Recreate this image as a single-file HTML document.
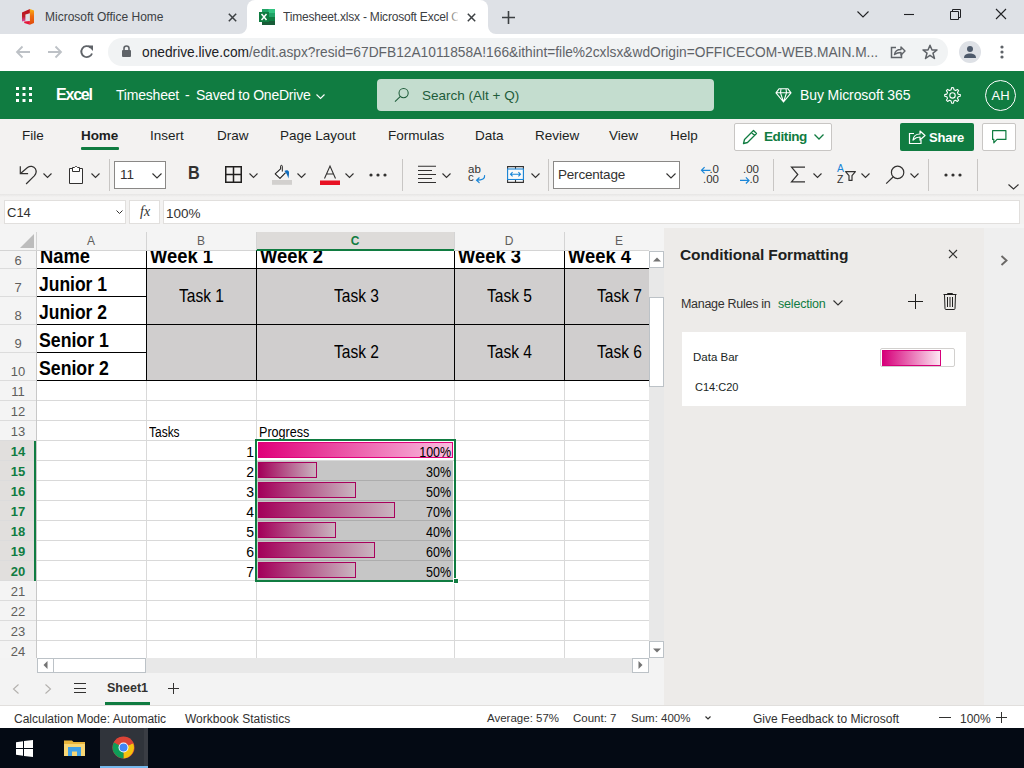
<!DOCTYPE html>
<html><head><meta charset="utf-8">
<style>
*{box-sizing:border-box;margin:0;padding:0}
html,body{width:1024px;height:768px;overflow:hidden;background:#fff;font-family:"Liberation Sans",sans-serif;color:#201f1e}
.a{position:absolute;white-space:nowrap}
svg{position:absolute;overflow:visible}
</style></head><body>

<!-- ============ CHROME TAB STRIP ============ -->
<div class="a" style="left:0;top:0;width:1024px;height:34px;background:#dee1e6"></div>
<!-- tab 1 -->
<svg style="left:0;top:0" width="40" height="34"><defs><linearGradient id="og" x1="0" y1="0" x2="0" y2="1"><stop offset="0" stop-color="#fbb315"/><stop offset="0.45" stop-color="#ee6b10"/><stop offset="1" stop-color="#e04a0c"/></linearGradient><linearGradient id="lg" x1="0" y1="0" x2="0" y2="1"><stop offset="0" stop-color="#b9111c"/><stop offset="0.6" stop-color="#c0202a"/><stop offset="1" stop-color="#dc4aa8"/></linearGradient></defs>
<path d="M22 12.6L29.9 9V13.2L25.4 14.4V20.8L22 21.6Z" fill="url(#lg)"/>
<path d="M24.2 21.4L29.9 20.9V24.8L24.2 22.9Z" fill="#e5163a"/>
<path d="M29.9 9L34 10.5V22.9L29.9 24.8Z" fill="url(#og)"/></svg>
<div class="a" style="left:45px;top:10px;font-size:12px;color:#3c4043">Microsoft Office Home</div>
<svg style="left:228px;top:13px" width="9" height="9"><path d="M0.8 0.8L8.2 8.2M8.2 0.8L0.8 8.2" stroke="#3c4043" stroke-width="1.5"/></svg>
<!-- active tab -->
<div class="a" style="left:247px;top:0px;width:241px;height:34px;background:#fff;border-radius:8px 8px 0 0"></div>
<svg style="left:239px;top:26px" width="8" height="8"><path d="M0 8A8 8 0 0 0 8 0V8Z" fill="#fff"/></svg>
<svg style="left:488px;top:26px" width="8" height="8"><path d="M8 8A8 8 0 0 1 0 0V8Z" fill="#fff"/></svg>
<svg style="left:259px;top:9px" width="16" height="16" viewBox="0 0 16 16">
  <rect x="3" y="0" width="13" height="16" fill="#21a366"/>
  <rect x="9.5" y="0" width="6.5" height="4" fill="#33c481"/>
  <rect x="3" y="12" width="13" height="4" fill="#185c37"/>
  <rect x="3" y="8" width="13" height="4" fill="#107c41"/>
  <rect x="0" y="3" width="10" height="10" fill="#107c41"/>
  <path d="M2.5 5L7.5 11M7.5 5L2.5 11" stroke="#fff" stroke-width="1.5"/>
</svg>
<div class="a" style="left:283px;top:10px;width:175px;overflow:hidden;font-size:12px;color:#3c4043;letter-spacing:-0.2px">Timesheet.xlsx - Microsoft Excel Online</div>
<div class="a" style="left:448px;top:5px;width:14px;height:24px;background:linear-gradient(90deg,rgba(255,255,255,0),#fff 80%)"></div>
<svg style="left:467px;top:13px" width="9" height="9"><path d="M0.8 0.8L8.2 8.2M8.2 0.8L0.8 8.2" stroke="#3c4043" stroke-width="1.5"/></svg>
<svg style="left:502px;top:11px" width="13" height="13"><path d="M6.5 0V13M0 6.5H13" stroke="#3c4043" stroke-width="1.6"/></svg>
<!-- window controls -->
<svg style="left:857px;top:11px" width="12" height="7"><path d="M0.5 0.5L6 6L11.5 0.5" fill="none" stroke="#202124" stroke-width="1.1"/></svg>
<svg style="left:904px;top:14px" width="10" height="1"><path d="M0 0.5H10" stroke="#202124" stroke-width="1.1"/></svg>
<svg style="left:950px;top:9px" width="11" height="11"><path d="M0.5 2.5H8.5V10.5H0.5Z M2.5 2.5V0.5H10.5V8.5H8.5" fill="none" stroke="#202124" stroke-width="1"/></svg>
<svg style="left:996px;top:9px" width="10" height="10"><path d="M0 0L10 10M10 0L0 10" stroke="#202124" stroke-width="1.1"/></svg>

<!-- ============ CHROME TOOLBAR ============ -->
<div class="a" style="left:0;top:34px;width:1024px;height:37px;background:#fff"></div>
<svg style="left:15px;top:45px" width="16" height="14"><path d="M15 7H2M7.5 1.5L2 7L7.5 12.5" fill="none" stroke="#bdc1c6" stroke-width="1.8"/></svg>
<svg style="left:47px;top:45px" width="16" height="14"><path d="M1 7H14M8.5 1.5L14 7L8.5 12.5" fill="none" stroke="#bdc1c6" stroke-width="1.8"/></svg>
<svg style="left:79px;top:44px" width="16" height="16" viewBox="0 0 16 16"><path d="M13 9.5A5.5 5.5 0 1 1 11.5 3.5" fill="none" stroke="#5f6368" stroke-width="1.9"/><path d="M8.5 1.5H14V7Z" fill="#5f6368"/></svg>
<div class="a" style="left:108px;top:38px;width:840px;height:28px;background:#f1f3f4;border-radius:14px"></div>
<svg style="left:122px;top:45px" width="9" height="12" viewBox="0 0 9 12"><path d="M2 5V3.5A2.5 2.5 0 0 1 7 3.5V5" fill="none" stroke="#5f6368" stroke-width="1.6"/><rect x="0" y="5" width="9" height="7" rx="1" fill="#5f6368"/></svg>
<div class="a" style="left:142px;top:45px;font-size:13.75px;color:#5f6368"><span style="color:#202124">onedrive.live.com</span>/edit.aspx?resid=67DFB12A1011858A!166&amp;ithint=file%2cxlsx&amp;wdOrigin=OFFICECOM-WEB.MAIN.M...</div>
<svg style="left:890px;top:45px" width="16" height="14" viewBox="0 0 16 14"><path d="M6 2.5H1.5V12.5H11.5V9" fill="none" stroke="#5f6368" stroke-width="1.5"/><path d="M4.5 9.5C5 6 8 4.5 11 4.5V2L15 6L11 10V7.5C8.5 7.5 6.5 8 4.5 9.5Z" fill="none" stroke="#5f6368" stroke-width="1.4" stroke-linejoin="round"/></svg>
<svg style="left:922px;top:44px" width="16" height="16" viewBox="0 0 16 16"><path d="M8 1.2L10 6H15L11 9.2L12.5 14.5L8 11.3L3.5 14.5L5 9.2L1 6H6Z" fill="none" stroke="#5f6368" stroke-width="1.5" stroke-linejoin="round"/></svg>
<div class="a" style="left:959px;top:41px;width:22px;height:22px;border-radius:11px;background:#dee1e6"></div>
<svg style="left:963px;top:45px" width="14" height="14" viewBox="0 0 14 14"><circle cx="7" cy="4" r="3" fill="#4e5a6b"/><path d="M1 13C1 9.5 4 8.5 7 8.5S13 9.5 13 13Z" fill="#4e5a6b"/></svg>
<svg style="left:1000px;top:45px" width="4" height="14"><circle cx="2" cy="2" r="1.6" fill="#5f6368"/><circle cx="2" cy="7" r="1.6" fill="#5f6368"/><circle cx="2" cy="12" r="1.6" fill="#5f6368"/></svg>

<!-- ============ EXCEL HEADER ============ -->
<div class="a" style="left:0;top:71px;width:1024px;height:48px;background:#107c41"></div>
<svg style="left:16px;top:87px" width="16" height="16"><g fill="#fff">
<rect x="0" y="0" width="3" height="3"/><rect x="6.5" y="0" width="3" height="3"/><rect x="13" y="0" width="3" height="3"/>
<rect x="0" y="6" width="3" height="3"/><rect x="6.5" y="6" width="3" height="3"/><rect x="13" y="6" width="3" height="3"/>
<rect x="0" y="12" width="3" height="3"/><rect x="6.5" y="12" width="3" height="3"/><rect x="13" y="12" width="3" height="3"/></g></svg>
<div class="a" style="left:56px;top:86px;font-size:16px;font-weight:700;color:#fff;letter-spacing:-1.2px">Excel</div>
<div class="a" style="left:116px;top:87px;font-size:14px;color:#fff;letter-spacing:-0.2px">Timesheet</div><div class="a" style="left:185px;top:87px;font-size:14px;color:#fff">-</div><div class="a" style="left:196px;top:87px;font-size:14px;color:#fff;letter-spacing:-0.22px">Saved to OneDrive</div>
<svg style="left:316px;top:94px" width="9" height="5"><path d="M0.5 0.5L4.5 4.5L8.5 0.5" fill="none" stroke="#fff" stroke-width="1.1"/></svg>
<div class="a" style="left:377px;top:79px;width:337px;height:32px;background:#c4ddcf;border-radius:4px"></div>
<svg style="left:394px;top:87px" width="16" height="16" viewBox="0 0 16 16"><circle cx="9.6" cy="6.1" r="4.6" fill="none" stroke="#1e5c3a" stroke-width="1.05"/><path d="M6.4 9.4L1 14.6" stroke="#1e5c3a" stroke-width="1.1"/></svg>
<div class="a" style="left:422px;top:88px;font-size:13.5px;color:#1e5c3a">Search (Alt + Q)</div>
<svg style="left:775px;top:88px" width="17" height="15" viewBox="0 0 17 15"><path d="M4 0.8H13L16 4.8L8.5 14L1 4.8Z M1 4.8H16 M6 0.8L5.5 4.8L8.5 14L11.5 4.8L11 0.8" fill="none" stroke="#fff" stroke-width="1.1" stroke-linejoin="round"/></svg>
<div class="a" style="left:800px;top:87px;font-size:14px;color:#fff;letter-spacing:-0.1px">Buy Microsoft 365</div>
<svg style="left:943px;top:86px" width="18" height="18" viewBox="0 0 18 18"><path d="M9 1.5L10.5 1.7L11 3.8L12.6 4.6L14.5 3.5L15.6 4.6L14.5 6.5L15.2 8.2L17.3 8.6V10.2L15.2 10.7L14.5 12.3L15.6 14.2L14.4 15.4L12.5 14.3L10.9 15L10.4 17.2H8.6L8.1 15L6.5 14.3L4.6 15.4L3.4 14.2L4.5 12.3L3.8 10.7L1.7 10.2V8.6L3.8 8.1L4.5 6.5L3.4 4.6L4.6 3.4L6.5 4.5L8.1 3.8L8.6 1.7Z" fill="none" stroke="#fff" stroke-width="1.1" stroke-linejoin="round"/><circle cx="9.5" cy="9.4" r="2.7" fill="none" stroke="#fff" stroke-width="1.1"/></svg>
<div class="a" style="left:985px;top:80px;width:31px;height:31px;border-radius:50%;border:1px solid #fff"></div>
<div class="a" style="left:985px;top:88px;width:31px;text-align:center;font-size:13px;color:#fff">AH</div>

<!-- ============ RIBBON ============ -->
<div class="a" style="left:0;top:119px;width:1024px;height:77px;background:#f3f2f1"></div>
<div class="a" style="left:0;top:194px;width:1024px;height:3px;background:linear-gradient(#e6e5e4,#f3f2f1)"></div>
<div class="a" style="top:128px;left:0;font-size:13.5px;color:#201f1e">
  <span class="a" style="left:22px">File</span>
  <span class="a" style="left:81px;font-weight:700;letter-spacing:-0.1px">Home</span>
  <span class="a" style="left:150px">Insert</span>
  <span class="a" style="left:217px">Draw</span>
  <span class="a" style="left:280px">Page Layout</span>
  <span class="a" style="left:388px">Formulas</span>
  <span class="a" style="left:475px">Data</span>
  <span class="a" style="left:535px">Review</span>
  <span class="a" style="left:609px">View</span>
  <span class="a" style="left:670px">Help</span>
</div>
<div class="a" style="left:81px;top:147px;width:38px;height:3px;background:#107c41;border-radius:1px"></div>
<!-- Editing btn -->
<div class="a" style="left:734px;top:123px;width:98px;height:28px;background:#fff;border:1px solid #c8c6c4;border-radius:2px"></div>
<svg style="left:742px;top:129px" width="16" height="16" viewBox="0 0 16 16"><path d="M1.5 14.5L2.5 10.5L11.5 1.5L14.5 4.5L5.5 13.5Z M9.5 3.5L12.5 6.5" fill="none" stroke="#107c41" stroke-width="1.3" stroke-linejoin="round"/></svg>
<div class="a" style="left:764px;top:129px;font-size:13.5px;font-weight:700;color:#107c41;letter-spacing:-0.4px">Editing</div>
<svg style="left:814px;top:134px" width="10" height="6"><path d="M0.5 0.5L5 5L9.5 0.5" fill="none" stroke="#107c41" stroke-width="1.3"/></svg>
<!-- Share btn -->
<div class="a" style="left:900px;top:123px;width:74px;height:28px;background:#107c41;border-radius:2px"></div>
<svg style="left:908px;top:128px" width="18" height="17" viewBox="0 0 18 17"><path d="M6 5.5H1.5V15.5H13V12" fill="none" stroke="#fff" stroke-width="1.2"/><path d="M5 12C5.5 8 8.5 6 12 6V3L17 7.5L12 12V9C9 9 7 10 5 12Z" fill="none" stroke="#fff" stroke-width="1.2" stroke-linejoin="round"/></svg>
<div class="a" style="left:929px;top:130px;font-size:13px;font-weight:700;color:#fff;letter-spacing:-0.2px">Share</div>
<!-- comment btn -->
<div class="a" style="left:982px;top:123px;width:34px;height:28px;background:#fff;border:1px solid #c8c6c4;border-radius:2px"></div>
<svg style="left:992px;top:130px" width="15" height="14" viewBox="0 0 15 14"><path d="M0.6 0.6H13.9V9.4H5L1.8 12.8V9.4H0.6Z" fill="none" stroke="#107c41" stroke-width="1.2" stroke-linejoin="round"/></svg>

<!-- toolbar icons -->
<g id="tb"></g>
<svg style="left:19px;top:165px" width="19" height="20" viewBox="0 0 19 20"><path d="M1.3 1.3V8.6H9.1" fill="none" stroke="#323130" stroke-width="1.2"/><path d="M1.8 8.2L8.5 2.5C11 0.6 14.8 0.9 16.4 3.8C17.7 6.3 17 9 15.3 10.9L7.1 19" fill="none" stroke="#323130" stroke-width="1.2"/></svg>
<svg style="left:43px;top:173px" width="10" height="6"><path d="M0.5 0.5L4.5 4.5L8.5 0.5" fill="none" stroke="#323130" stroke-width="1.1"/></svg>
<svg style="left:69px;top:166px" width="14" height="18" viewBox="0 0 14 18"><path d="M0.5 2.5H13.5V17.5H0.5Z" fill="#fafafa" stroke="#323130" stroke-width="1"/><path d="M3.5 5.5V1.5H5.5L6.5 0.5H7.5L8.5 1.5H10.5V5.5Z" fill="#fff" stroke="#323130" stroke-width="1"/></svg>
<svg style="left:91px;top:173px" width="10" height="6"><path d="M0.5 0.5L4.5 4.5L8.5 0.5" fill="none" stroke="#323130" stroke-width="1.1"/></svg>
<div class="a" style="left:109px;top:159px;width:1px;height:32px;background:#c8c6c4"></div>
<div class="a" style="left:114px;top:161px;width:52px;height:28px;background:#fff;border:1px solid #8a8886"></div>
<div class="a" style="left:120px;top:167px;font-size:13.5px;color:#323130">11</div>
<svg style="left:152px;top:173px" width="10" height="6"><path d="M0.5 0.5L5 5L9.5 0.5" fill="none" stroke="#323130" stroke-width="1.1"/></svg>
<div class="a" style="left:188px;top:163px;font-size:18px;font-weight:700;color:#323130;transform:scaleX(0.9);transform-origin:left">B</div>
<svg style="left:225px;top:166px" width="17" height="17" viewBox="0 0 17 17"><path d="M0.75 0.75H16.25V16.25H0.75Z M8.5 0.75V16.25 M0.75 8.5H16.25" fill="none" stroke="#201f1e" stroke-width="1.5"/></svg>
<svg style="left:249px;top:173px" width="10" height="6"><path d="M0.5 0.5L4.5 4.5L8.5 0.5" fill="none" stroke="#323130" stroke-width="1.1"/></svg>
<svg style="left:268px;top:160px" width="30" height="30" viewBox="0 0 30 30"><path d="M12.6 8.8L7.2 13.9L12 18.4L17.6 12.6" fill="#fafafa" stroke="#201f1e" stroke-width="1.1" stroke-linejoin="round"/><path d="M12.6 9V6.2A0.8 0.8 0 0 1 14.3 6.2V11.6" fill="none" stroke="#201f1e" stroke-width="1"/><path d="M16.4 11C18.4 9.6 20.6 10.2 21 12C21.2 14 20.8 16.2 20.4 18.6C19.6 16 18.6 13 16.4 11Z" fill="#0f6cbd"/><rect x="4" y="20" width="20" height="4.8" fill="#d2d0ce"/></svg>
<svg style="left:297px;top:173px" width="10" height="6"><path d="M0.5 0.5L4.5 4.5L8.5 0.5" fill="none" stroke="#323130" stroke-width="1.1"/></svg>
<svg style="left:320px;top:165px" width="20" height="21" viewBox="0 0 20 21"><path d="M4.5 13.5L10 1L15.5 13.5 M6.5 9H13.5" fill="none" stroke="#323130" stroke-width="1.1"/><rect x="0" y="15.5" width="20" height="4.5" fill="#e81123"/></svg>
<svg style="left:345px;top:173px" width="10" height="6"><path d="M0.5 0.5L4.5 4.5L8.5 0.5" fill="none" stroke="#323130" stroke-width="1.1"/></svg>
<svg style="left:369px;top:173px" width="18" height="4"><circle cx="2" cy="2" r="1.6" fill="#323130"/><circle cx="9" cy="2" r="1.6" fill="#323130"/><circle cx="16" cy="2" r="1.6" fill="#323130"/></svg>
<div class="a" style="left:402px;top:159px;width:1px;height:32px;background:#c8c6c4"></div>
<svg style="left:418px;top:165px" width="18" height="19"><path d="M0 1.25H18M0 5.4H14M0 9.45H18M0 13.5H14M0 17.5H18" stroke="#323130" stroke-width="1.05"/></svg>
<svg style="left:442px;top:173px" width="10" height="6"><path d="M0.5 0.5L4.5 4.5L8.5 0.5" fill="none" stroke="#323130" stroke-width="1.1"/></svg>
<div class="a" style="left:468px;top:163px;font-size:11.5px;color:#323130;line-height:12px">ab</div><div class="a" style="left:468px;top:171px;font-size:11.5px;color:#323130;line-height:12px">c</div>
<svg style="left:474px;top:174px" width="12" height="10" viewBox="0 0 12 10"><path d="M10.6 1.5C11 4.5 8.5 6.2 2.8 6.2 M5.2 3.8L2.6 6.2L5.2 8.6" fill="none" stroke="#1a86d8" stroke-width="1.2" stroke-linecap="round"/></svg>
<svg style="left:507px;top:166px" width="18" height="18" viewBox="0 0 18 18"><path d="M0.6 0.6H16.4V16.4H0.6Z M8.5 0.6V3 M8.5 13.5V16.4" fill="#fff" stroke="#323130" stroke-width="1.1"/><rect x="0.6" y="3" width="15.8" height="10.5" fill="#fafafa" stroke="#1a86d8" stroke-width="1.1"/><path d="M3.5 8.2H13.5 M5.6 6.1L3.5 8.2L5.6 10.3 M11.4 6.1L13.5 8.2L11.4 10.3" fill="none" stroke="#1a86d8" stroke-width="1.1"/></svg>
<svg style="left:531px;top:173px" width="10" height="6"><path d="M0.5 0.5L4.5 4.5L8.5 0.5" fill="none" stroke="#323130" stroke-width="1.1"/></svg>
<div class="a" style="left:548px;top:159px;width:1px;height:32px;background:#c8c6c4"></div>
<div class="a" style="left:553px;top:161px;width:127px;height:28px;background:#fff;border:1px solid #8a8886"></div>
<div class="a" style="left:558px;top:167px;font-size:13.5px;color:#323130;letter-spacing:-0.2px">Percentage</div>
<svg style="left:666px;top:173px" width="10" height="6"><path d="M0.5 0.5L5 5L9.5 0.5" fill="none" stroke="#323130" stroke-width="1.1"/></svg>
<!-- decimal icons -->
<div class="a" style="left:703px;top:164px;font-size:11.5px;color:#323130;line-height:10px;text-align:right;width:16px">.0</div><div class="a" style="left:701px;top:174px;font-size:11.5px;color:#323130;line-height:10px;text-align:right;width:18px">.00</div>
<svg style="left:700px;top:166px" width="11" height="9"><path d="M10.5 4.3H1.5 M4.6 1.2L1.5 4.3L4.6 7.4" fill="none" stroke="#1a86d8" stroke-width="1.2"/></svg>
<div class="a" style="left:740px;top:164px;font-size:11.5px;color:#323130;line-height:10px;text-align:right;width:19px">.00</div><div class="a" style="left:740px;top:174px;font-size:11.5px;color:#323130;line-height:10px;text-align:right;width:19px">.0</div>
<svg style="left:739px;top:176px" width="12" height="9"><path d="M1 4.4H10 M6.9 1.3L10 4.4L6.9 7.5" fill="none" stroke="#1a86d8" stroke-width="1.2"/></svg>
<div class="a" style="left:773px;top:159px;width:1px;height:32px;background:#c8c6c4"></div>
<svg style="left:790px;top:166px" width="16" height="17"><path d="M15 1.2H1.5L7.8 8.5L1.5 15.9H15" fill="none" stroke="#323130" stroke-width="1.2"/></svg>
<svg style="left:813px;top:173px" width="10" height="6"><path d="M0.5 0.5L4.5 4.5L8.5 0.5" fill="none" stroke="#323130" stroke-width="1.1"/></svg>
<div class="a" style="left:837px;top:163px;font-size:10.5px;color:#1a86d8;line-height:10px">A</div>
<div class="a" style="left:837px;top:174px;font-size:10.5px;color:#323130;line-height:10px">Z</div>
<svg style="left:845px;top:171px" width="11" height="10"><path d="M0.6 0.6H10.4L7 4.6V9.4H4V4.6Z" fill="none" stroke="#323130" stroke-width="1.2" stroke-linejoin="round"/></svg>
<svg style="left:861px;top:173px" width="10" height="6"><path d="M0.5 0.5L4.5 4.5L8.5 0.5" fill="none" stroke="#323130" stroke-width="1.1"/></svg>
<svg style="left:885px;top:165px" width="20" height="20" viewBox="0 0 20 20"><circle cx="12.6" cy="7.4" r="6.2" fill="none" stroke="#323130" stroke-width="1.2"/><path d="M8.3 11.8L1.2 18.6" stroke="#323130" stroke-width="1.2"/></svg>
<svg style="left:910px;top:173px" width="10" height="6"><path d="M0.5 0.5L4.5 4.5L8.5 0.5" fill="none" stroke="#323130" stroke-width="1.1"/></svg>
<div class="a" style="left:928px;top:159px;width:1px;height:32px;background:#c8c6c4"></div>
<svg style="left:944px;top:173px" width="18" height="4"><circle cx="2" cy="2" r="1.6" fill="#323130"/><circle cx="9" cy="2" r="1.6" fill="#323130"/><circle cx="16" cy="2" r="1.6" fill="#323130"/></svg>
<div class="a" style="left:977px;top:159px;width:1px;height:32px;background:#c8c6c4"></div>
<svg style="left:1008px;top:184px" width="11" height="6"><path d="M0.5 0.5L5.5 5L10.5 0.5" fill="none" stroke="#323130" stroke-width="1.1"/></svg>

<!-- ============ FORMULA BAR ============ -->
<div class="a" style="left:0;top:197px;width:1024px;height:34px;background:#f3f2f1"></div>
<div class="a" style="left:4px;top:200px;width:122px;height:24px;background:#fff;border:1px solid #e1dfdd"></div>
<div class="a" style="left:7px;top:205px;font-size:13px;color:#323130">C14</div>
<svg style="left:116px;top:210px" width="7" height="5"><path d="M0.5 0.5L3.5 3.5L6.5 0.5" fill="none" stroke="#323130" stroke-width="1"/></svg>
<div class="a" style="left:129px;top:200px;width:31px;height:24px;background:#fff;border:1px solid #e1dfdd"></div>
<div class="a" style="left:140px;top:204px;font-size:14px;font-style:italic;font-family:'Liberation Serif',serif;color:#323130">fx</div>
<div class="a" style="left:163px;top:200px;width:857px;height:24px;background:#fff;border:1px solid #e1dfdd"></div>
<div class="a" style="left:166px;top:206px;font-size:13.5px;color:#323130">100%</div>

<div class="a" style="left:0;top:224px;width:664px;height:434px;background:#fff"></div>
<div class="a" style="left:0;top:224px;width:649px;height:27px;background:#f4f4f4;border-bottom:1px solid #d4d4d4"></div>
<div class="a" style="left:256px;top:232px;width:198px;height:19px;background:#dddbd9;border-bottom:2px solid #107c41"></div>
<div class="a" style="left:36px;top:232px;width:1px;height:18px;background:#d4d4d4"></div>
<svg style="left:20px;top:234px" width="14" height="14"><path d="M14 0V14H0Z" fill="#bcbcbc"/></svg>
<div class="a" style="left:0;top:251px;width:37px;height:407px;background:#f4f4f4;border-right:1px solid #c8c8c8"></div>
<div class="a" style="left:146px;top:232px;width:1px;height:18px;background:#d4d4d4"></div>
<div class="a" style="left:256px;top:232px;width:1px;height:18px;background:#d4d4d4"></div>
<div class="a" style="left:454px;top:232px;width:1px;height:18px;background:#d4d4d4"></div>
<div class="a" style="left:564px;top:232px;width:1px;height:18px;background:#d4d4d4"></div>
<div class="a" style="left:36px;top:234px;width:110px;text-align:center;font-size:12px;color:#605e5c">A</div>
<div class="a" style="left:146px;top:234px;width:110px;text-align:center;font-size:12px;color:#605e5c">B</div>
<div class="a" style="left:256px;top:234px;width:198px;text-align:center;font-size:12px;font-weight:700;color:#107c41">C</div>
<div class="a" style="left:454px;top:234px;width:110px;text-align:center;font-size:12px;color:#605e5c">D</div>
<div class="a" style="left:564px;top:234px;width:110px;text-align:center;font-size:12px;color:#605e5c">E</div>
<div class="a" style="left:0;top:268px;width:36px;height:1px;background:#dcdcdc"></div>
<div class="a" style="left:0;top:253px;width:36px;text-align:center;font-size:13px;font-weight:400;color:#605e5c">6</div>
<div class="a" style="left:0;top:296px;width:36px;height:1px;background:#dcdcdc"></div>
<div class="a" style="left:0;top:280px;width:36px;text-align:center;font-size:13px;font-weight:400;color:#605e5c">7</div>
<div class="a" style="left:0;top:324px;width:36px;height:1px;background:#dcdcdc"></div>
<div class="a" style="left:0;top:308px;width:36px;text-align:center;font-size:13px;font-weight:400;color:#605e5c">8</div>
<div class="a" style="left:0;top:352px;width:36px;height:1px;background:#dcdcdc"></div>
<div class="a" style="left:0;top:336px;width:36px;text-align:center;font-size:13px;font-weight:400;color:#605e5c">9</div>
<div class="a" style="left:0;top:380px;width:36px;height:1px;background:#dcdcdc"></div>
<div class="a" style="left:0;top:364px;width:36px;text-align:center;font-size:13px;font-weight:400;color:#605e5c">10</div>
<div class="a" style="left:0;top:400px;width:36px;height:1px;background:#dcdcdc"></div>
<div class="a" style="left:0;top:384px;width:36px;text-align:center;font-size:13px;font-weight:400;color:#605e5c">11</div>
<div class="a" style="left:0;top:420px;width:36px;height:1px;background:#dcdcdc"></div>
<div class="a" style="left:0;top:404px;width:36px;text-align:center;font-size:13px;font-weight:400;color:#605e5c">12</div>
<div class="a" style="left:0;top:440px;width:36px;height:1px;background:#dcdcdc"></div>
<div class="a" style="left:0;top:424px;width:36px;text-align:center;font-size:13px;font-weight:400;color:#605e5c">13</div>
<div class="a" style="left:0;top:441px;width:34px;height:20px;background:#e1dfdd"></div>
<div class="a" style="left:0;top:460px;width:36px;height:1px;background:#dcdcdc"></div>
<div class="a" style="left:0;top:444px;width:36px;text-align:center;font-size:13px;font-weight:700;color:#107c41">14</div>
<div class="a" style="left:0;top:461px;width:34px;height:20px;background:#e1dfdd"></div>
<div class="a" style="left:0;top:480px;width:36px;height:1px;background:#dcdcdc"></div>
<div class="a" style="left:0;top:464px;width:36px;text-align:center;font-size:13px;font-weight:700;color:#107c41">15</div>
<div class="a" style="left:0;top:481px;width:34px;height:20px;background:#e1dfdd"></div>
<div class="a" style="left:0;top:500px;width:36px;height:1px;background:#dcdcdc"></div>
<div class="a" style="left:0;top:484px;width:36px;text-align:center;font-size:13px;font-weight:700;color:#107c41">16</div>
<div class="a" style="left:0;top:501px;width:34px;height:20px;background:#e1dfdd"></div>
<div class="a" style="left:0;top:520px;width:36px;height:1px;background:#dcdcdc"></div>
<div class="a" style="left:0;top:504px;width:36px;text-align:center;font-size:13px;font-weight:700;color:#107c41">17</div>
<div class="a" style="left:0;top:521px;width:34px;height:20px;background:#e1dfdd"></div>
<div class="a" style="left:0;top:540px;width:36px;height:1px;background:#dcdcdc"></div>
<div class="a" style="left:0;top:524px;width:36px;text-align:center;font-size:13px;font-weight:700;color:#107c41">18</div>
<div class="a" style="left:0;top:541px;width:34px;height:20px;background:#e1dfdd"></div>
<div class="a" style="left:0;top:560px;width:36px;height:1px;background:#dcdcdc"></div>
<div class="a" style="left:0;top:544px;width:36px;text-align:center;font-size:13px;font-weight:700;color:#107c41">19</div>
<div class="a" style="left:0;top:561px;width:34px;height:20px;background:#e1dfdd"></div>
<div class="a" style="left:0;top:580px;width:36px;height:1px;background:#dcdcdc"></div>
<div class="a" style="left:0;top:564px;width:36px;text-align:center;font-size:13px;font-weight:700;color:#107c41">20</div>
<div class="a" style="left:0;top:600px;width:36px;height:1px;background:#dcdcdc"></div>
<div class="a" style="left:0;top:584px;width:36px;text-align:center;font-size:13px;font-weight:400;color:#605e5c">21</div>
<div class="a" style="left:0;top:620px;width:36px;height:1px;background:#dcdcdc"></div>
<div class="a" style="left:0;top:604px;width:36px;text-align:center;font-size:13px;font-weight:400;color:#605e5c">22</div>
<div class="a" style="left:0;top:640px;width:36px;height:1px;background:#dcdcdc"></div>
<div class="a" style="left:0;top:624px;width:36px;text-align:center;font-size:13px;font-weight:400;color:#605e5c">23</div>
<div class="a" style="left:0;top:660px;width:36px;height:1px;background:#dcdcdc"></div>
<div class="a" style="left:0;top:644px;width:36px;text-align:center;font-size:13px;font-weight:400;color:#605e5c">24</div>
<div class="a" style="left:34px;top:441px;width:2px;height:140px;background:#107c41"></div>
<div class="a" style="left:37px;top:380px;width:612px;height:1px;background:#d9d9d9"></div>
<div class="a" style="left:37px;top:400px;width:612px;height:1px;background:#d9d9d9"></div>
<div class="a" style="left:37px;top:420px;width:612px;height:1px;background:#d9d9d9"></div>
<div class="a" style="left:37px;top:440px;width:612px;height:1px;background:#d9d9d9"></div>
<div class="a" style="left:37px;top:460px;width:612px;height:1px;background:#d9d9d9"></div>
<div class="a" style="left:37px;top:480px;width:612px;height:1px;background:#d9d9d9"></div>
<div class="a" style="left:37px;top:500px;width:612px;height:1px;background:#d9d9d9"></div>
<div class="a" style="left:37px;top:520px;width:612px;height:1px;background:#d9d9d9"></div>
<div class="a" style="left:37px;top:540px;width:612px;height:1px;background:#d9d9d9"></div>
<div class="a" style="left:37px;top:560px;width:612px;height:1px;background:#d9d9d9"></div>
<div class="a" style="left:37px;top:580px;width:612px;height:1px;background:#d9d9d9"></div>
<div class="a" style="left:37px;top:600px;width:612px;height:1px;background:#d9d9d9"></div>
<div class="a" style="left:37px;top:620px;width:612px;height:1px;background:#d9d9d9"></div>
<div class="a" style="left:37px;top:640px;width:612px;height:1px;background:#d9d9d9"></div>
<div class="a" style="left:37px;top:660px;width:612px;height:1px;background:#d9d9d9"></div>
<div class="a" style="left:146px;top:251px;width:1px;height:407px;background:#d9d9d9"></div>
<div class="a" style="left:256px;top:251px;width:1px;height:407px;background:#d9d9d9"></div>
<div class="a" style="left:454px;top:251px;width:1px;height:407px;background:#d9d9d9"></div>
<div class="a" style="left:564px;top:251px;width:1px;height:407px;background:#d9d9d9"></div>
<div class="a" style="left:146px;top:268px;width:110px;height:56px;background:#d0cece"></div>
<div class="a" style="left:146px;top:324px;width:110px;height:56px;background:#d0cece"></div>
<div class="a" style="left:256px;top:268px;width:198px;height:56px;background:#d0cece"></div>
<div class="a" style="left:256px;top:324px;width:198px;height:56px;background:#d0cece"></div>
<div class="a" style="left:454px;top:268px;width:110px;height:56px;background:#d0cece"></div>
<div class="a" style="left:454px;top:324px;width:110px;height:56px;background:#d0cece"></div>
<div class="a" style="left:564px;top:268px;width:85px;height:56px;background:#d0cece"></div>
<div class="a" style="left:564px;top:324px;width:85px;height:56px;background:#d0cece"></div>
<div class="a" style="left:37px;top:268px;width:612px;height:1px;background:#000"></div>
<div class="a" style="left:37px;top:324px;width:612px;height:1px;background:#000"></div>
<div class="a" style="left:37px;top:380px;width:612px;height:1px;background:#000"></div>
<div class="a" style="left:37px;top:296px;width:109px;height:1px;background:#000"></div>
<div class="a" style="left:37px;top:352px;width:109px;height:1px;background:#000"></div>
<div class="a" style="left:146px;top:251px;width:1px;height:130px;background:#000"></div>
<div class="a" style="left:256px;top:251px;width:1px;height:130px;background:#000"></div>
<div class="a" style="left:454px;top:251px;width:1px;height:130px;background:#000"></div>
<div class="a" style="left:564px;top:251px;width:1px;height:130px;background:#000"></div>
<div class="a" style="left:37px;top:251px;width:612px;height:17px;overflow:hidden">
<div class="a" style="left:2.6000000000000014px;top:-4.73px;font-size:20px;line-height:20px;color:#000;transform:scaleX(0.9174);transform-origin:left top;font-weight:700">Name</div>
<div class="a" style="left:113.19999999999999px;top:-4.73px;font-size:20px;line-height:20px;color:#000;transform:scaleX(0.9184);transform-origin:left top;font-weight:700">Week 1</div>
<div class="a" style="left:223.2px;top:-4.73px;font-size:20px;line-height:20px;color:#000;transform:scaleX(0.9184);transform-origin:left top;font-weight:700">Week 2</div>
<div class="a" style="left:421.2px;top:-4.73px;font-size:20px;line-height:20px;color:#000;transform:scaleX(0.9184);transform-origin:left top;font-weight:700">Week 3</div>
<div class="a" style="left:531.2px;top:-4.73px;font-size:20px;line-height:20px;color:#000;transform:scaleX(0.9184);transform-origin:left top;font-weight:700">Week 4</div>
</div>
<div class="a" style="left:39px;top:274.37px;font-size:20px;line-height:20px;color:#000;transform:scaleX(0.8740);transform-origin:left top;font-weight:700">Junior 1</div>
<div class="a" style="left:39px;top:302.37px;font-size:20px;line-height:20px;color:#000;transform:scaleX(0.8740);transform-origin:left top;font-weight:700">Junior 2</div>
<div class="a" style="left:39px;top:330.37px;font-size:20px;line-height:20px;color:#000;transform:scaleX(0.8847);transform-origin:left top;font-weight:700">Senior 1</div>
<div class="a" style="left:39px;top:358.37px;font-size:20px;line-height:20px;color:#000;transform:scaleX(0.8847);transform-origin:left top;font-weight:700">Senior 2</div>
<div class="a" style="left:179.2px;top:287.34px;font-size:18.5px;line-height:18.5px;color:#000;transform:scaleX(0.8411);transform-origin:left top;">Task 1</div>
<div class="a" style="left:333.5px;top:287.34px;font-size:18.5px;line-height:18.5px;color:#000;transform:scaleX(0.8411);transform-origin:left top;">Task 3</div>
<div class="a" style="left:487.0px;top:287.34px;font-size:18.5px;line-height:18.5px;color:#000;transform:scaleX(0.8411);transform-origin:left top;">Task 5</div>
<div class="a" style="left:597.2px;top:287.34px;font-size:18.5px;line-height:18.5px;color:#000;transform:scaleX(0.8411);transform-origin:left top;">Task 7</div>
<div class="a" style="left:333.5px;top:343.34px;font-size:18.5px;line-height:18.5px;color:#000;transform:scaleX(0.8411);transform-origin:left top;">Task 2</div>
<div class="a" style="left:487.0px;top:343.34px;font-size:18.5px;line-height:18.5px;color:#000;transform:scaleX(0.8411);transform-origin:left top;">Task 4</div>
<div class="a" style="left:597.2px;top:343.34px;font-size:18.5px;line-height:18.5px;color:#000;transform:scaleX(0.8411);transform-origin:left top;">Task 6</div>
<div class="a" style="left:149px;top:424px;font-size:14px;line-height:16px;color:#000;transform:scaleX(0.855);transform-origin:left">Tasks</div>
<div class="a" style="left:259px;top:424px;font-size:14px;line-height:16px;color:#000;transform:scaleX(0.9);transform-origin:left">Progress</div>
<div class="a" style="left:258px;top:442px;width:195px;height:16px;border:1px solid #e0007a;background:linear-gradient(90deg,#e0007a,#f9bfdf)"></div>
<div class="a" style="left:146px;top:444px;width:108px;text-align:right;font-size:14px;line-height:16px;color:#000">1</div>
<div class="a" style="left:256px;top:444px;width:197px;padding-right:2px;text-align:right;font-size:14px;line-height:16px;color:#000;transform:scaleX(0.895);transform-origin:right">100%</div>
<div class="a" style="left:257px;top:461px;width:196px;height:19px;background:#c6c6c6"></div>
<div class="a" style="left:258px;top:462px;width:59px;height:16px;border:1px solid #a8005c;background:linear-gradient(90deg,#a3005a,#c9b6c0)"></div>
<div class="a" style="left:146px;top:464px;width:108px;text-align:right;font-size:14px;line-height:16px;color:#000">2</div>
<div class="a" style="left:256px;top:464px;width:197px;padding-right:2px;text-align:right;font-size:14px;line-height:16px;color:#000;transform:scaleX(0.895);transform-origin:right">30%</div>
<div class="a" style="left:257px;top:481px;width:196px;height:19px;background:#c6c6c6"></div>
<div class="a" style="left:257px;top:480px;width:196px;height:1px;background:#adadad"></div>
<div class="a" style="left:258px;top:482px;width:98px;height:16px;border:1px solid #a8005c;background:linear-gradient(90deg,#a3005a,#c9b6c0)"></div>
<div class="a" style="left:146px;top:484px;width:108px;text-align:right;font-size:14px;line-height:16px;color:#000">3</div>
<div class="a" style="left:256px;top:484px;width:197px;padding-right:2px;text-align:right;font-size:14px;line-height:16px;color:#000;transform:scaleX(0.895);transform-origin:right">50%</div>
<div class="a" style="left:257px;top:501px;width:196px;height:19px;background:#c6c6c6"></div>
<div class="a" style="left:257px;top:500px;width:196px;height:1px;background:#adadad"></div>
<div class="a" style="left:258px;top:502px;width:137px;height:16px;border:1px solid #a8005c;background:linear-gradient(90deg,#a3005a,#c9b6c0)"></div>
<div class="a" style="left:146px;top:504px;width:108px;text-align:right;font-size:14px;line-height:16px;color:#000">4</div>
<div class="a" style="left:256px;top:504px;width:197px;padding-right:2px;text-align:right;font-size:14px;line-height:16px;color:#000;transform:scaleX(0.895);transform-origin:right">70%</div>
<div class="a" style="left:257px;top:521px;width:196px;height:19px;background:#c6c6c6"></div>
<div class="a" style="left:257px;top:520px;width:196px;height:1px;background:#adadad"></div>
<div class="a" style="left:258px;top:522px;width:78px;height:16px;border:1px solid #a8005c;background:linear-gradient(90deg,#a3005a,#c9b6c0)"></div>
<div class="a" style="left:146px;top:524px;width:108px;text-align:right;font-size:14px;line-height:16px;color:#000">5</div>
<div class="a" style="left:256px;top:524px;width:197px;padding-right:2px;text-align:right;font-size:14px;line-height:16px;color:#000;transform:scaleX(0.895);transform-origin:right">40%</div>
<div class="a" style="left:257px;top:541px;width:196px;height:19px;background:#c6c6c6"></div>
<div class="a" style="left:257px;top:540px;width:196px;height:1px;background:#adadad"></div>
<div class="a" style="left:258px;top:542px;width:117px;height:16px;border:1px solid #a8005c;background:linear-gradient(90deg,#a3005a,#c9b6c0)"></div>
<div class="a" style="left:146px;top:544px;width:108px;text-align:right;font-size:14px;line-height:16px;color:#000">6</div>
<div class="a" style="left:256px;top:544px;width:197px;padding-right:2px;text-align:right;font-size:14px;line-height:16px;color:#000;transform:scaleX(0.895);transform-origin:right">60%</div>
<div class="a" style="left:257px;top:561px;width:196px;height:19px;background:#c6c6c6"></div>
<div class="a" style="left:257px;top:560px;width:196px;height:1px;background:#adadad"></div>
<div class="a" style="left:258px;top:562px;width:98px;height:16px;border:1px solid #a8005c;background:linear-gradient(90deg,#a3005a,#c9b6c0)"></div>
<div class="a" style="left:146px;top:564px;width:108px;text-align:right;font-size:14px;line-height:16px;color:#000">7</div>
<div class="a" style="left:256px;top:564px;width:197px;padding-right:2px;text-align:right;font-size:14px;line-height:16px;color:#000;transform:scaleX(0.895);transform-origin:right">50%</div>
<div class="a" style="left:255px;top:439px;width:201px;height:143px;border:2px solid #107c41"></div>
<div class="a" style="left:453px;top:578px;width:6px;height:6px;background:#107c41;border:1px solid #fff"></div>
<div class="a" style="left:649px;top:224px;width:15px;height:434px;background:#e8e8e8"></div>
<div class="a" style="left:649px;top:224px;width:15px;height:27px;background:#f4f4f4"></div>
<div class="a" style="left:649px;top:251px;width:15px;height:17px;background:#fff;border:1px solid #bcc2c7"></div>
<svg style="left:653px;top:257px" width="8" height="5"><path d="M0 4.5L4 0.5L8 4.5Z" fill="#737373"/></svg>
<div class="a" style="left:649px;top:297px;width:15px;height:90px;background:#fff;border:1px solid #bcc2c7"></div>
<div class="a" style="left:649px;top:641px;width:15px;height:17px;background:#fff;border:1px solid #bcc2c7"></div>
<svg style="left:653px;top:648px" width="8" height="5"><path d="M0 0.5L4 4.5L8 0.5Z" fill="#737373"/></svg>
<div class="a" style="left:0;top:658px;width:664px;height:15px;background:#f3f3f3"></div>
<div class="a" style="left:37px;top:658px;width:612px;height:15px;background:#e8e8e8"></div>
<div class="a" style="left:37px;top:658px;width:17px;height:15px;background:#fff;border:1px solid #bcc2c7"></div>
<svg style="left:43px;top:661px" width="5" height="8"><path d="M4.5 0L0.5 4L4.5 8Z" fill="#737373"/></svg>
<div class="a" style="left:53px;top:658px;width:93px;height:15px;background:#fff;border:1px solid #bcc2c7"></div>
<div class="a" style="left:632px;top:658px;width:17px;height:15px;background:#fff;border:1px solid #bcc2c7"></div>
<svg style="left:638px;top:661px" width="5" height="8"><path d="M0.5 0L4.5 4L0.5 8Z" fill="#737373"/></svg>
<div class="a" style="left:664px;top:224px;width:360px;height:4px;background:#f4f4f4"></div>
<div class="a" style="left:664px;top:228px;width:360px;height:477px;background:#efefef"></div>
<div class="a" style="left:664px;top:228px;width:320px;height:477px;background:#edebe9"></div>
<div class="a" style="left:680px;top:246px;font-size:15.5px;font-weight:700;color:#201f1e;letter-spacing:-0.1px">Conditional Formatting</div>
<svg style="left:949px;top:250px" width="8" height="8"><path d="M0 0L8 8M8 0L0 8" stroke="#323130" stroke-width="1.1"/></svg>
<svg style="left:1000px;top:255px" width="9" height="12"><path d="M1.5 1L6.5 5.5L1.5 10" fill="none" stroke="#6a6866" stroke-width="1.9"/></svg>
<div class="a" style="left:681px;top:297px;font-size:12.5px;color:#323130;letter-spacing:-0.29px">Manage Rules in</div>
<div class="a" style="left:778px;top:297px;font-size:12.5px;color:#107c41;letter-spacing:-0.2px">selection</div>
<svg style="left:833px;top:300px" width="10" height="6"><path d="M0.5 0.5L5 5L9.5 0.5" fill="none" stroke="#323130" stroke-width="1.1"/></svg>
<svg style="left:908px;top:294px" width="15" height="15"><path d="M7.5 0V15M0 7.5H15" stroke="#201f1e" stroke-width="1"/></svg>
<svg style="left:943px;top:293px" width="14" height="18" viewBox="0 0 14 18"><path d="M0.5 1.5H13.5 M4.5 1.5V0.5H9.5V1.5 M1.5 1.5L2 15.5Q2 16.5 3 16.5H11Q12 16.5 12 15.5L12.5 1.5 M4.5 4V14 M7 4V14 M9.5 4V14" fill="none" stroke="#201f1e" stroke-width="1"/></svg>
<div class="a" style="left:682px;top:332px;width:284px;height:74px;background:#fff"></div>
<div class="a" style="left:693px;top:351px;font-size:11.5px;color:#201f1e">Data Bar</div>
<div class="a" style="left:695px;top:381px;font-size:11px;color:#201f1e">C14:C20</div>
<div class="a" style="left:880px;top:348px;width:75px;height:19px;background:#fff;border:1px solid #d2d0ce;border-radius:2px"></div>
<div class="a" style="left:882px;top:350px;width:59px;height:16px;border:1px solid #d6007a;background:linear-gradient(90deg,#d6007a,#fde6f2)"></div>
<div class="a" style="left:0;top:673px;width:664px;height:32px;background:#f3f3f3"></div>
<div class="a" style="left:0;top:705px;width:1024px;height:1px;background:#e1dfdd"></div>
<svg style="left:12px;top:684px" width="8" height="10"><path d="M6.5 0.5L1.5 5L6.5 9.5" fill="none" stroke="#b3b0ad" stroke-width="1.1"/></svg>
<svg style="left:44px;top:684px" width="8" height="10"><path d="M1.5 0.5L6.5 5L1.5 9.5" fill="none" stroke="#b3b0ad" stroke-width="1.1"/></svg>
<svg style="left:74px;top:683px" width="12" height="11"><path d="M0 0.5H12M0 5.5H12M0 9.5H12" stroke="#323130" stroke-width="1"/></svg>
<div class="a" style="left:107px;top:681px;font-size:12.5px;font-weight:700;color:#323130">Sheet1</div>
<div class="a" style="left:105px;top:702px;width:45px;height:3px;background:#107c41"></div>
<svg style="left:168px;top:683px" width="12" height="12"><path d="M5.5 0V11M0 5.5H11" stroke="#323130" stroke-width="1"/></svg>
<div class="a" style="left:0;top:706px;width:1024px;height:22px;background:#fff"></div>
<div class="a" style="left:14px;font-size:12px;color:#323130;top:712px">Calculation Mode: Automatic</div>
<div class="a" style="left:185px;font-size:12px;color:#323130;top:712px">Workbook Statistics</div>
<div class="a" style="left:487px;font-size:12px;color:#323130;top:712px;font-size:11.5px">Average: 57%</div>
<div class="a" style="left:573px;font-size:12px;color:#323130;top:712px;font-size:11.5px">Count: 7</div>
<div class="a" style="left:631px;font-size:12px;color:#323130;top:712px;font-size:11.5px">Sum: 400%</div>
<svg style="left:705px;top:716px" width="6" height="4"><path d="M0.5 0.5L3 3L5.5 0.5" fill="none" stroke="#323130" stroke-width="1.2"/></svg>
<div class="a" style="left:753px;font-size:12px;color:#323130;top:712px">Give Feedback to Microsoft</div>
<svg style="left:939px;top:717px" width="12" height="2"><path d="M0 0.5H12" stroke="#323130" stroke-width="1"/></svg>
<div class="a" style="left:960px;font-size:12px;color:#323130;top:712px">100%</div>
<svg style="left:996px;top:712px" width="11" height="11"><path d="M5.5 0V11M0 5.5H11" stroke="#323130" stroke-width="1"/></svg>
<div class="a" style="left:1019px;top:728px;width:1px;height:40px;background:#4a4e55"></div>
<div class="a" style="left:0;top:728px;width:1024px;height:40px;background:#040a14"></div>
<svg style="left:16px;top:740px" width="17" height="17" viewBox="0 0 17 17"><path d="M0 2.3L7 1.3V8H0Z M8 1.1L17 0V8H8Z M0 9H7V15.7L0 14.7Z M8 9H17V17L8 15.9Z" fill="#fff"/></svg>
<svg style="left:64px;top:739px" width="22" height="18" viewBox="0 0 22 18"><path d="M0 1.5H8L9.5 3H21V17H0Z" fill="#e8b53c"/><path d="M0 5H21V17H0Z" fill="#f8d775"/><path d="M4 8H17V17H13V12.5H8V17H4Z" fill="#3fa0e8"/></svg>
<div class="a" style="left:100px;top:728px;width:44px;height:40px;background:#30343b"></div>
<div class="a" style="left:144px;top:728px;width:4px;height:40px;background:#3a3d44"></div>
<div class="a" style="left:100px;top:766px;width:48px;height:2px;background:#76b9ed"></div>
<svg style="left:112px;top:736px" width="23" height="23" viewBox="0 0 24 24"><circle cx="12" cy="12" r="11.5" fill="#db4437"/><path d="M12 12L22 7.5A11.5 11.5 0 0 1 12 23.5Z" fill="#f4c20d"/><path d="M12 12L12 23.5A11.5 11.5 0 0 1 2 6.5Z" fill="#0f9d58"/><path d="M12 12L2 6.5A11.5 11.5 0 0 1 22 7.5Z" fill="#db4437"/><circle cx="12" cy="12" r="5.2" fill="#fff"/><circle cx="12" cy="12" r="4.2" fill="#4285f4"/></svg>
</body></html>
